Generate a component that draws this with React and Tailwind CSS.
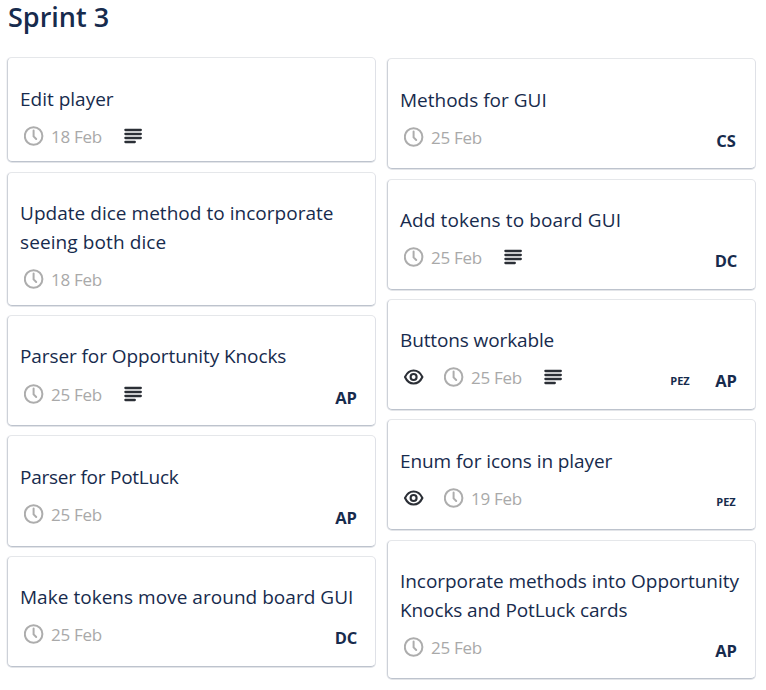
const leftCards = [
  { lines: [['Edit player', 'tracking-[0px]']], date: '18 Feb', notes: true, box: 'h-[105px] pt-[27px]' },
  {
    lines: [
      ['Update dice method to incorporate', 'tracking-[0.03px]'],
      ['seeing both dice', 'tracking-[0.1px]'],
    ],
    date: '18 Feb',
    box: 'mt-[10px] h-[134px] pt-[26px]',
  },
  { lines: [['Parser for Opportunity Knocks', 'tracking-[-0.09px]']], date: '25 Feb', notes: true, members: ['AP'], box: 'mt-[9px] h-[111px] pt-[26px]', row: 'pt-[13px]' },
  { lines: [['Parser for PotLuck', 'tracking-[-0.25px]']], date: '25 Feb', members: ['AP'], box: 'mt-[9px] h-[112px] pt-[27px]' },
  { lines: [['Make tokens move around board GUI', 'tracking-[0.03px]']], date: '25 Feb', members: ['DC'], box: 'mt-[9px] h-[111px] pt-[26px]' },
];

const rightCards = [
  { lines: [['Methods for GUI', 'tracking-[0px]']], date: '25 Feb', members: ['CS'], box: 'h-[111px] pt-[27px]' },
  { lines: [['Add tokens to board GUI', 'tracking-[0.1px]']], date: '25 Feb', notes: true, members: ['DC'], box: 'mt-[10px] h-[111px] pt-[26px]' },
  { lines: [['Buttons workable', 'tracking-[-0.12px]']], date: '25 Feb', watched: true, notes: true, members: ['PEZ', 'AP'], box: 'mt-[9px] h-[111px] pt-[26px]' },
  { lines: [['Enum for icons in player', 'tracking-[-0.08px]']], date: '19 Feb', watched: true, members: ['PEZ'], box: 'mt-[9px] h-[111px] pt-[27px]' },
  {
    lines: [
      ['Incorporate methods into Opportunity', 'tracking-[-0.05px]'],
      ['Knocks and PotLuck cards', 'tracking-[-0.1px]'],
    ],
    date: '25 Feb',
    members: ['AP'],
    box: 'mt-[10px] h-[139px] pt-[26px]',
  },
];

function ClockIcon() {
  return (
    <svg className="h-5 w-5 shrink-0" viewBox="0 0 20 20" fill="none" stroke="#adadad" strokeWidth="2">
      <circle cx="9.6" cy="10" r="8.8" />
      <path d="M9.6 4.5v5.9l2.6 2.6" strokeLinecap="round" strokeLinejoin="round" />
    </svg>
  );
}

function NotesIcon() {
  return (
    <svg className="h-5 w-5 shrink-0" viewBox="0 0 20 20" fill="none" stroke="#2b2f36" strokeWidth="2.3" strokeLinecap="round">
      <path d="M2.4 4h15.4M2.4 8h15.4M2.4 12h15.4M2.4 16h9.4" />
    </svg>
  );
}

function EyeIcon() {
  return (
    <svg className="h-5 w-5 shrink-0" viewBox="0 0 20 20" fill="none" stroke="#2b2f36" strokeWidth="2.1">
      <path d="M1 10C3 5.7 6 3.5 9.6 3.5S16.4 5.7 18.4 10C16.4 14.3 13.2 16.5 9.6 16.5S3 14.3 1 10Z" strokeLinejoin="round" />
      <circle cx="9.6" cy="10" r="3" />
    </svg>
  );
}

function Card({ card }) {
  return (
    <article
      className={`flex w-[369px] flex-col rounded-[5px] border border-t-[#e5e7ea] border-r-[#dfe1e7] border-b-[#bdc3cd] border-l-[#cdd1d8] bg-white pl-[12px] shadow-[0_1px_0_#e3e5e9,-1px_0_0_#f3f4f6] ${card.box}`}
    >
      <h2 className="text-[19px] leading-[29px] text-[#172b4d]">
        {card.lines.map(([text, tracking]) => (
          <span key={text} className={`block w-max whitespace-nowrap ${tracking}`}>{text}</span>
        ))}
      </h2>
      <div className={`flex h-[37px] justify-between ${card.row || 'pt-[12px]'}`}>
        <div className="flex items-start pl-[4px]">
          {card.watched && <div className="mr-5"><EyeIcon /></div>}
          <ClockIcon />
          <span className="ml-[7px] w-[52px] text-[17px] leading-[22px] tracking-[-0.3px] whitespace-nowrap text-[#a9a9a9]">{card.date}</span>
          {card.notes && <div className="ml-[20px]"><NotesIcon /></div>}
        </div>
        <div className="flex pt-[3px] pr-[6px] font-bold text-[#172b4d]">
          {(card.members || []).map((m) => (
            <span key={m} className={`w-[46px] text-center leading-[22px] ${m.length > 2 ? 'text-[11px]' : 'text-[16.5px]'}`}>{m}</span>
          ))}
        </div>
      </div>
    </article>
  );
}

export default function App() {
  return (
    <main className="h-[690px] w-[766px] bg-white font-['Open_Sans',sans-serif]">
      <h1 className="h-[57px] pl-[8px] text-[27px] leading-[34px] font-semibold text-[#172b4d]">Sprint 3</h1>
      <div className="flex items-start gap-[11px] pl-[7px]">
        <section>{leftCards.map((c) => <Card key={c.lines[0][0]} card={c} />)}</section>
        <section className="pt-px">{rightCards.map((c) => <Card key={c.lines[0][0]} card={c} />)}</section>
      </div>
    </main>
  );
}
